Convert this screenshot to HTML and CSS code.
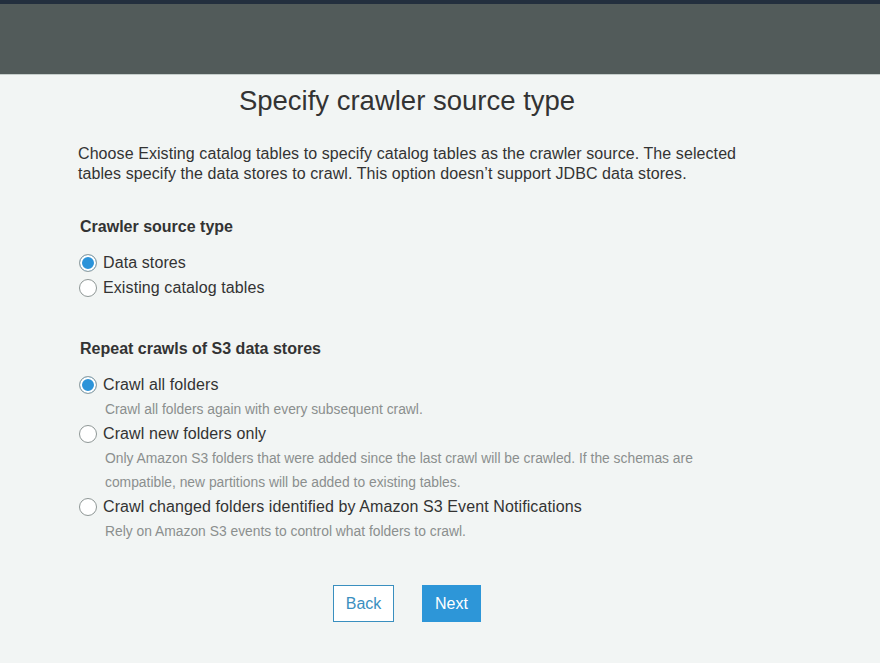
FILE: index.html
```html
<!DOCTYPE html>
<html>
<head>
<meta charset="utf-8">
<link rel="stylesheet" href="styles.css">
</head>
<body>
<header class="topbar">
  <div class="nav-stripe"></div>
  <div class="gray-band"></div>
</header>
<main class="content">
  <h1 class="title">Specify crawler source type</h1>
  <p class="intro">Choose Existing catalog tables to specify catalog tables as the crawler source. The selected tables specify the data stores to crawl. This option doesn’t support JDBC data stores.</p>

  <h2 class="section-heading">Crawler source type</h2>
  <div class="radio-list">
    <div class="radio-row"><span class="radio checked"></span><span class="label">Data stores</span></div>
    <div class="radio-row"><span class="radio"></span><span class="label">Existing catalog tables</span></div>
  </div>

  <h2 class="section-heading second">Repeat crawls of S3 data stores</h2>
  <div class="radio-list">
    <div class="radio-row"><span class="radio checked"></span><span class="label">Crawl all folders</span></div>
    <div class="desc">Crawl all folders again with every subsequent crawl.</div>
    <div class="radio-row"><span class="radio"></span><span class="label">Crawl new folders only</span></div>
    <div class="desc">Only Amazon S3 folders that were added since the last crawl will be crawled. If the schemas are compatible, new partitions will be added to existing tables.</div>
    <div class="radio-row"><span class="radio"></span><span class="label">Crawl changed folders identified by Amazon S3 Event Notifications</span></div>
    <div class="desc">Rely on Amazon S3 events to control what folders to crawl.</div>
  </div>

  <div class="actions">
    <button class="btn btn-back">Back</button>
    <button class="btn btn-next">Next</button>
  </div>
</main>
</body>
</html>
```
FILE: styles.css
```css
html, body {
  margin: 0;
  padding: 0;
  background: #f2f5f4;
  font-family: "Liberation Sans", Arial, sans-serif;
  color: #333;
}
.topbar {
  display: flex;
  flex-direction: column;
}
.nav-stripe {
  height: 4px;
  background: #232f3e;
}
.gray-band {
  height: 70px;
  background: #525b5a;
  border-bottom: 1px solid #c6cecb;
}
.content {
  width: 660px;
  margin-left: 78px;
}
.title {
  margin: 11px 0 0;
  font-size: 27.5px;
  line-height: 30px;
  font-weight: normal;
  text-align: center;
  color: #333;
  padding-right: 2px;
}
.intro {
  margin: 28px 0 0;
  font-size: 16px;
  line-height: 20px;
  letter-spacing: 0.08px;
  color: #333;
}
.section-heading {
  margin: 33px 0 0 2px;
  font-size: 16px;
  line-height: 20px;
  font-weight: bold;
  color: #333;
}
.section-heading.second {
  margin-top: 39px;
}
.radio-list {
  margin-top: 13px;
  display: flex;
  flex-direction: column;
}
.radio-row {
  height: 25px;
  display: flex;
  align-items: center;
  gap: 6px;
  font-size: 16px;
  letter-spacing: 0.1px;
  padding-left: 1px;
}
.radio {
  width: 18px;
  height: 18px;
  box-sizing: border-box;
  border: 1px solid #8f9796;
  border-radius: 50%;
  background: #fff;
  flex: none;
}
.radio.checked {
  background: #2b93d9;
  box-shadow: inset 0 0 0 2px #fff;
  border-color: #9aa3a2;
}
.label {
  color: #333;
}
.desc {
  padding-left: 27px;
  font-size: 13.85px;
  line-height: 24px;
  color: #8b8f8e;
  width: 620px;
}
.actions {
  margin-top: 42px;
  padding-right: 2px;
  display: flex;
  justify-content: center;
  gap: 28px;
}
.btn {
  height: 37px;
  font-family: "Liberation Sans", Arial, sans-serif;
  font-size: 16px;
  padding: 0;
  box-sizing: border-box;
  cursor: pointer;
}
.btn-back {
  width: 61px;
  background: #fff;
  border: 1px solid #3a8fbf;
  color: #3b8fc0;
}
.btn-next {
  width: 59px;
  background: #2d96d8;
  border: 1px solid #2d96d8;
  color: #fff;
}
```
